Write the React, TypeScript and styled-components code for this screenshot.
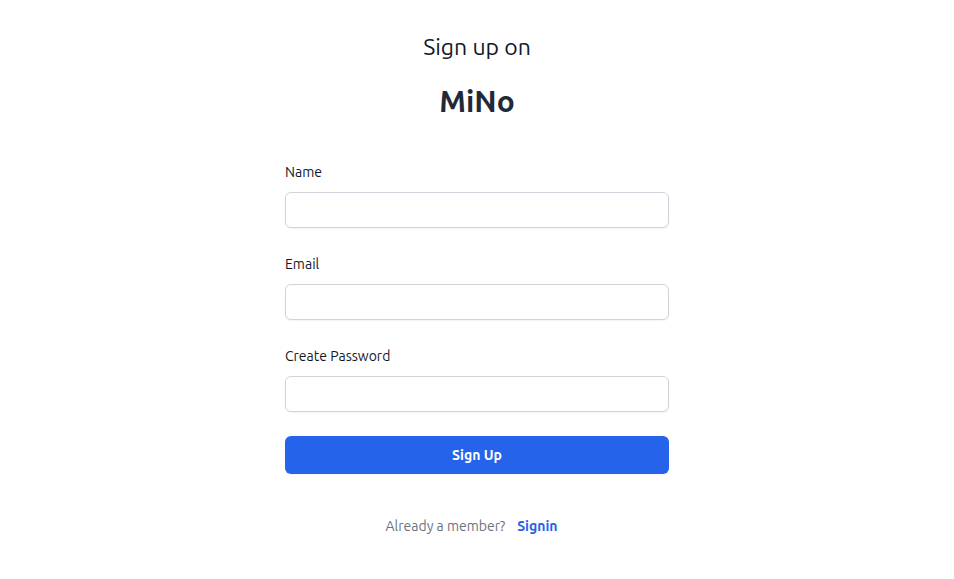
import React from "react";
import styled, { createGlobalStyle } from "styled-components";

const Global = createGlobalStyle`
  html, body { margin: 0; padding: 0; background: #fff; }
  body { font-family: Ubuntu, system-ui, "Noto Sans", sans-serif; -webkit-font-smoothing: antialiased; }
  * { box-sizing: border-box; }
`;

const Page = styled.div`
  display: flex;
  flex-direction: column;
  align-items: center;
  padding: 31px 24px 0;
`;

const Header = styled.div`
  width: 384px;
  display: flex;
  flex-direction: column;
  align-items: center;
  gap: 20px;
`;

const Subtitle = styled.h2`
  margin: 0;
  font-size: 23px;
  line-height: 32px;
  font-weight: 400;
  color: #111827;
`;

const Brand = styled.h1`
  margin: 0;
  font-size: 30px;
  line-height: 36px;
  font-weight: 700;
  color: #1f2937;
`;

const Form = styled.form`
  margin-top: 41px;
  width: 384px;
  display: flex;
  flex-direction: column;
  gap: 24px;
`;

const Field = styled.div`
  display: flex;
  flex-direction: column;
  gap: 8px;
`;

const Label = styled.label`
  font-size: 14px;
  line-height: 24px;
  font-weight: 400;
  color: #111827;
`;

const Input = styled.input`
  display: block;
  width: 100%;
  height: 36px;
  border: 1px solid #d1d5db;
  border-radius: 6px;
  padding: 6px 12px;
  font-size: 14px;
  font-family: inherit;
  color: #111827;
  box-shadow: 0 1px 2px rgba(0, 0, 0, 0.05);
  outline: none;
`;

const Button = styled.button`
  display: flex;
  justify-content: center;
  align-items: center;
  width: 100%;
  height: 38px;
  border: none;
  border-radius: 6px;
  background: #2563eb;
  color: #fff;
  font-family: inherit;
  font-size: 14px;
  line-height: 24px;
  font-weight: 600;
  box-shadow: 0 1px 2px rgba(0, 0, 0, 0.05);
  cursor: pointer;
`;

const Footer = styled.p`
  margin: 42px 0 0;
  padding-right: 11px;
  text-align: center;
  font-size: 14px;
  line-height: 20px;
  color: #6b7280;
`;

const Link = styled.a`
  margin-left: 12px;
  font-weight: 600;
  color: #2563eb;
  text-decoration: none;
`;

export default function App() {
  return (
    <>
      <Global />
      <Page>
        <Header>
          <Subtitle>Sign up on</Subtitle>
          <Brand>MiNo</Brand>
        </Header>
        <Form onSubmit={(e) => e.preventDefault()}>
          <Field>
            <Label htmlFor="name">Name</Label>
            <Input id="name" type="text" />
          </Field>
          <Field>
            <Label htmlFor="email">Email</Label>
            <Input id="email" type="email" />
          </Field>
          <Field>
            <Label htmlFor="password">Create Password</Label>
            <Input id="password" type="password" />
          </Field>
          <Button type="submit">Sign Up</Button>
        </Form>
        <Footer>
          Already a member?<Link href="#">Signin</Link>
        </Footer>
      </Page>
    </>
  );
}
